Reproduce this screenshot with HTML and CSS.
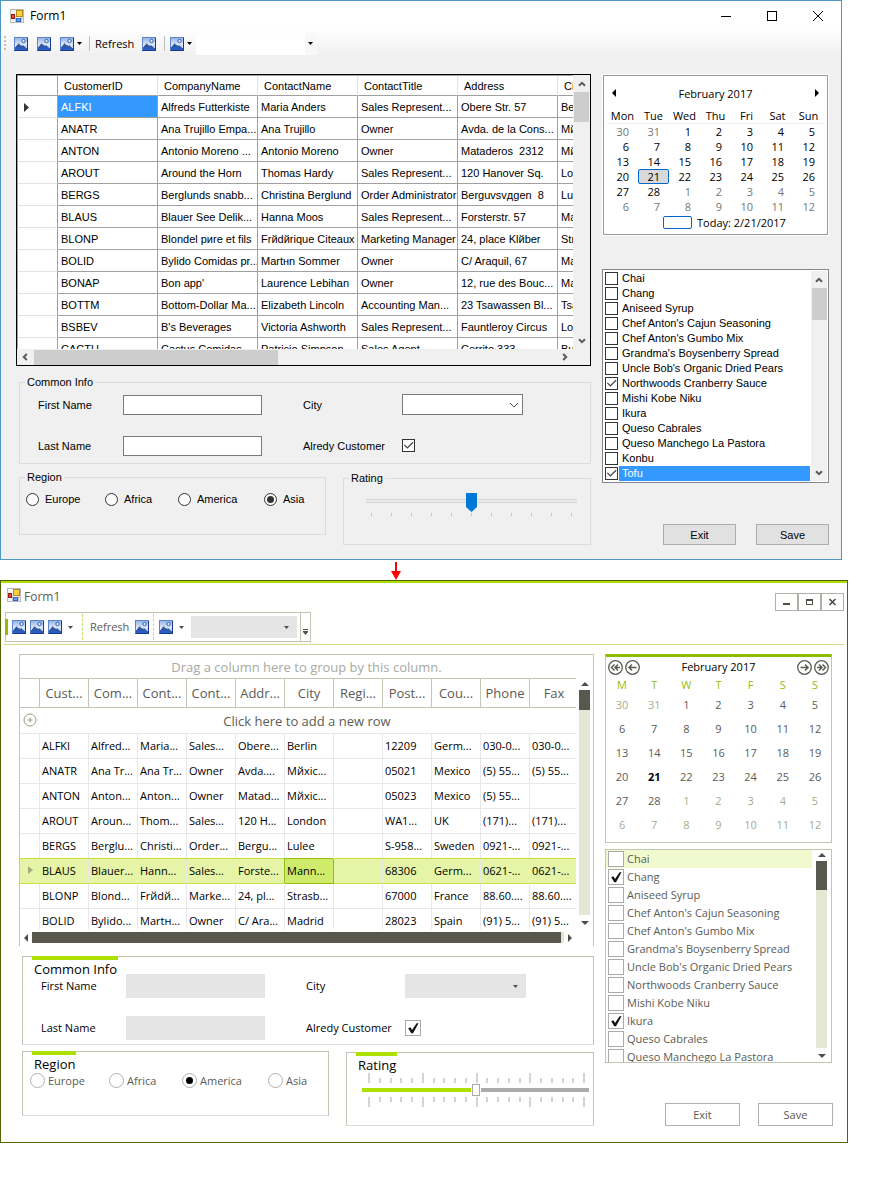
FILE: index.html
```html
<!DOCTYPE html>
<html lang="en">
<head>
<meta charset="utf-8">
<title>Form1</title>
<link rel="stylesheet" href="styles.css">
</head>
<body>
<svg class="defs" width="0" height="0" aria-hidden="true">
  <defs>
    <linearGradient id="sky" x1="0" y1="0" x2="0" y2="1"><stop offset="0" stop-color="#8fb0e4"/><stop offset="0.55" stop-color="#dfeafb"/><stop offset="1" stop-color="#6f97dc"/></linearGradient>
    <linearGradient id="hill" x1="0" y1="0" x2="0" y2="1"><stop offset="0" stop-color="#2f4f86"/><stop offset="1" stop-color="#2a5fc8"/></linearGradient>
    <symbol id="picture" viewBox="0 0 14 14">
      <rect x="0.5" y="0.5" width="13" height="13" fill="url(#sky)" stroke="#5b82c8"/>
      <path d="M1 10 L4.5 5.5 L7.5 8.5 L9 7.5 L13 11 V13 H1Z" fill="url(#hill)"/>
      <path d="M1 10 L4.5 5.8 L7 8.4 M8 8.6 L9.2 7.8 L13 11" fill="none" stroke="#fff" stroke-width="0.8"/>
      <circle cx="9.5" cy="4" r="1.7" fill="#e8f0fd" stroke="#2f5cae"/>
      <path d="M0.5 13.5H13.5V1" fill="none" stroke="#16398c"/>
    </symbol>
    <symbol id="app" viewBox="0 0 14 14">
      <rect x="0.5" y="0.5" width="13" height="13" fill="#f4f4f4" stroke="#b9b9b9"/>
      <path d="M0 9.5H14M5.5 8V14M11.5 8V14" stroke="#c4c4c4"/>
      <rect x="6.5" y="1.5" width="6" height="6" fill="#fccf3f" stroke="#b98a16"/>
      <rect x="1.5" y="5.5" width="3" height="4" fill="#e0473a" stroke="#971b12"/>
      <rect x="6.5" y="9.5" width="4" height="3" fill="#69a5f2" stroke="#2f69c6"/>
    </symbol>
    <symbol id="down" viewBox="0 0 5 3"><path d="M0 0H5L2.5 3Z" fill="currentColor"/></symbol>
    <symbol id="chev" viewBox="0 0 8 6"><path d="M1 4.8L4 1.8L7 4.8" fill="none" stroke="currentColor" stroke-width="2"/></symbol>
    <symbol id="tri" viewBox="0 0 8 4"><path d="M0 4L4 0L8 4Z" fill="currentColor"/></symbol>
  </defs>
</svg>

<main>
<section class="win classic" aria-label="Form1 classic">
  <header class="titlebar">
    <svg class="ico"><use href="#app"/></svg>
    <h1>Form1</h1>
    <div class="sysbuttons">
      <button aria-label="Minimize"><svg width="10" height="10"><path d="M0 5.5H10" stroke="#000"/></svg></button>
      <button aria-label="Maximize"><svg width="10" height="10"><rect x="0.5" y="0.5" width="9" height="9" fill="none" stroke="#000"/></svg></button>
      <button aria-label="Close"><svg width="10" height="10"><path d="M0 0L10 10M10 0L0 10" stroke="#000"/></svg></button>
    </div>
  </header>
  <div class="toolbar">
    <span class="grip"></span>
    <button aria-label="Picture one"><svg class="ico"><use href="#picture"/></svg></button>
    <button aria-label="Picture two"><svg class="ico"><use href="#picture"/></svg></button>
    <button class="drop" aria-label="Picture menu"><svg class="ico"><use href="#picture"/></svg><svg class="arr"><use href="#down"/></svg></button>
    <span class="sep"></span>
    <button class="txt">Refresh</button>
    <button aria-label="Picture three"><svg class="ico"><use href="#picture"/></svg></button>
    <span class="sep sep2"></span>
    <button class="drop" aria-label="Picture menu two"><svg class="ico"><use href="#picture"/></svg><svg class="arr"><use href="#down"/></svg></button>
    <span class="combo"><select aria-label="Tool choice"><option></option></select><svg class="arr"><use href="#down"/></svg></span>
  </div>

  <div class="content">
    <div class="left">
      <div class="datagrid">
        <div class="view">
          <table>
            <colgroup><col class="rh"><col><col><col><col><col><col></colgroup>
            <thead><tr><th></th><th>CustomerID</th><th>CompanyName</th><th>ContactName</th><th>ContactTitle</th><th>Address</th><th>City</th></tr></thead>
            <tbody>
              <tr><th><svg width="5" height="9"><path d="M0 0L5 4.5L0 9Z" fill="#333"/></svg></th><td class="sel">ALFKI</td><td>Alfreds Futterkiste</td><td>Maria Anders</td><td>Sales Represent...</td><td>Obere Str. 57</td><td>Berlin</td></tr>
              <tr><th></th><td>ANATR</td><td>Ana Trujillo Empa...</td><td>Ana Trujillo</td><td>Owner</td><td>Avda. de la Cons...</td><td>Mйxico D.F.</td></tr>
              <tr><th></th><td>ANTON</td><td>Antonio Moreno ...</td><td>Antonio Moreno</td><td>Owner</td><td>Mataderos  2312</td><td>Mйxico D.F.</td></tr>
              <tr><th></th><td>AROUT</td><td>Around the Horn</td><td>Thomas Hardy</td><td>Sales Represent...</td><td>120 Hanover Sq.</td><td>London</td></tr>
              <tr><th></th><td>BERGS</td><td>Berglunds snabb...</td><td>Christina Berglund</td><td>Order Administrator</td><td>Berguvsvдgen  8</td><td>Lulee</td></tr>
              <tr><th></th><td>BLAUS</td><td>Blauer See Delik...</td><td>Hanna Moos</td><td>Sales Represent...</td><td>Forsterstr. 57</td><td>Mannheim</td></tr>
              <tr><th></th><td>BLONP</td><td>Blondel pиre et fils</td><td>Frйdйrique Citeaux</td><td>Marketing Manager</td><td>24, place Klйber</td><td>Strasbourg</td></tr>
              <tr><th></th><td>BOLID</td><td>Bуlido Comidas pr...</td><td>Martнn Sommer</td><td>Owner</td><td>C/ Araquil, 67</td><td>Madrid</td></tr>
              <tr><th></th><td>BONAP</td><td>Bon app'</td><td>Laurence Lebihan</td><td>Owner</td><td>12, rue des Bouc...</td><td>Marseille</td></tr>
              <tr><th></th><td>BOTTM</td><td>Bottom-Dollar Ma...</td><td>Elizabeth Lincoln</td><td>Accounting Man...</td><td>23 Tsawassen Bl...</td><td>Tsawassen</td></tr>
              <tr><th></th><td>BSBEV</td><td>B's Beverages</td><td>Victoria Ashworth</td><td>Sales Represent...</td><td>Fauntleroy Circus</td><td>London</td></tr>
              <tr><th></th><td>CACTU</td><td>Cactus Comidas ...</td><td>Patricio Simpson</td><td>Sales Agent</td><td>Cerrito 333</td><td>Buenos Aires</td></tr>
            </tbody>
          </table>
        </div>
        <div class="vbar"><svg class="chev"><use href="#chev"/></svg><span class="thumb"></span><svg class="chev flip"><use href="#chev"/></svg></div>
        <div class="hbar"><svg class="chev west"><use href="#chev"/></svg><span class="thumb"></span><svg class="chev east"><use href="#chev"/></svg></div>
      </div>

      <fieldset class="common">
        <legend>Common Info</legend>
        <div class="fields">
          <label for="a-first">First Name</label><input id="a-first" type="text">
          <label class="second" for="a-city">City</label><span class="combo"><select id="a-city"><option></option></select><svg width="10" height="6"><path d="M1 1L5 5L9 1" fill="none" stroke="#555"/></svg></span>
          <label for="a-last">Last Name</label><input id="a-last" type="text">
          <label class="second" for="a-cust">Alredy Customer</label><input id="a-cust" type="checkbox" checked>
        </div>
      </fieldset>

      <div class="pair">
        <fieldset class="region">
          <legend>Region</legend>
          <div class="radios">
            <label><input type="radio" name="ra">Europe</label>
            <label><input type="radio" name="ra">Africa</label>
            <label><input type="radio" name="ra">America</label>
            <label><input type="radio" name="ra" checked>Asia</label>
          </div>
        </fieldset>
        <fieldset class="rating">
          <legend>Rating</legend>
          <input type="range" aria-label="Rating" min="0" max="10" value="5">
          <div class="ticks"><i></i><i></i><i></i><i></i><i></i><i></i><i></i><i></i><i></i><i></i><i></i></div>
        </fieldset>
      </div>
    </div>

    <div class="right">
      <div class="calendar">
        <div class="cal-head">
          <button aria-label="Previous month"><svg width="4" height="8"><path d="M4 0V8L0 4Z" fill="#000"/></svg></button>
          <span>February 2017</span>
          <button aria-label="Next month"><svg width="4" height="8"><path d="M0 0V8L4 4Z" fill="#000"/></svg></button>
        </div>
        <table>
          <thead><tr><th>Mon</th><th>Tue</th><th>Wed</th><th>Thu</th><th>Fri</th><th>Sat</th><th>Sun</th></tr></thead>
          <tbody>
            <tr><td class="out">30</td><td class="out">31</td><td>1</td><td>2</td><td>3</td><td>4</td><td>5</td></tr>
            <tr><td>6</td><td>7</td><td>8</td><td>9</td><td>10</td><td>11</td><td>12</td></tr>
            <tr><td>13</td><td>14</td><td>15</td><td>16</td><td>17</td><td>18</td><td>19</td></tr>
            <tr><td>20</td><td class="day">21</td><td>22</td><td>23</td><td>24</td><td>25</td><td>26</td></tr>
            <tr><td>27</td><td>28</td><td class="out">1</td><td class="out">2</td><td class="out">3</td><td class="out">4</td><td class="out">5</td></tr>
            <tr><td class="out">6</td><td class="out">7</td><td class="out">8</td><td class="out">9</td><td class="out">10</td><td class="out">11</td><td class="out">12</td></tr>
          </tbody>
        </table>
        <div class="today"><span class="box"></span>Today: 2/21/2017</div>
      </div>

      <div class="list">
        <ul>
          <li><label><input type="checkbox"><span>Chai</span></label></li>
          <li><label><input type="checkbox"><span>Chang</span></label></li>
          <li><label><input type="checkbox"><span>Aniseed Syrup</span></label></li>
          <li><label><input type="checkbox"><span>Chef Anton's Cajun Seasoning</span></label></li>
          <li><label><input type="checkbox"><span>Chef Anton's Gumbo Mix</span></label></li>
          <li><label><input type="checkbox"><span>Grandma's Boysenberry Spread</span></label></li>
          <li><label><input type="checkbox"><span>Uncle Bob's Organic Dried Pears</span></label></li>
          <li><label><input type="checkbox" checked><span>Northwoods Cranberry Sauce</span></label></li>
          <li><label><input type="checkbox"><span>Mishi Kobe Niku</span></label></li>
          <li><label><input type="checkbox"><span>Ikura</span></label></li>
          <li><label><input type="checkbox"><span>Queso Cabrales</span></label></li>
          <li><label><input type="checkbox"><span>Queso Manchego La Pastora</span></label></li>
          <li><label><input type="checkbox"><span>Konbu</span></label></li>
          <li class="sel"><label><input type="checkbox" checked><span>Tofu</span></label></li>
        </ul>
        <div class="vbar"><svg class="chev"><use href="#chev"/></svg><span class="thumb"></span><svg class="chev flip"><use href="#chev"/></svg></div>
      </div>

      <div class="actions"><button>Exit</button><button>Save</button></div>
    </div>
  </div>
</section>

<div class="becomes"><svg width="10" height="18" aria-hidden="true"><path d="M5 0V10" stroke="#f00" stroke-width="2"/><path d="M0 9H10L5 18Z" fill="#f00"/></svg></div>

<section class="win themed" aria-label="Form1 themed">
  <header class="titlebar">
    <svg class="ico"><use href="#app"/></svg>
    <h1>Form1</h1>
    <div class="sysbuttons">
      <button aria-label="Minimize"><svg width="8" height="8"><path d="M0 6H7" stroke="#4f4f48" stroke-width="2"/></svg></button>
      <button aria-label="Maximize"><svg width="8" height="8"><path d="M0.5 1V7M6.5 1V7M0 6.5H7" stroke="#4f4f48"/><path d="M0 2H7" stroke="#4f4f48" stroke-width="2"/></svg></button>
      <button aria-label="Close"><svg width="8" height="8"><path d="M0.5 1L6.5 7M6.5 1L0.5 7" stroke="#4f4f48" stroke-width="1.6"/></svg></button>
    </div>
  </header>
  <div class="toolrow">
    <div class="toolbar">
      <span class="grip"></span>
      <button aria-label="Picture one"><svg class="ico"><use href="#picture"/></svg></button>
      <button aria-label="Picture two"><svg class="ico"><use href="#picture"/></svg></button>
      <button class="drop" aria-label="Picture menu"><svg class="ico"><use href="#picture"/></svg><svg class="arr"><use href="#down"/></svg></button>
      <span class="sep"></span>
      <button class="txt">Refresh</button>
      <button aria-label="Picture three"><svg class="ico"><use href="#picture"/></svg></button>
      <span class="sep sep2"></span>
      <button class="drop" aria-label="Picture menu two"><svg class="ico"><use href="#picture"/></svg><svg class="arr"><use href="#down"/></svg></button>
      <span class="combo"><select aria-label="Tool choice"><option></option></select><svg class="arr"><use href="#down"/></svg></span>
      <button class="more" aria-label="More tools"><svg width="5" height="6"><path d="M0 0.5H5" stroke="#4f4f48"/><path d="M0 2H5V3L2.5 6L0 3Z" fill="#4f4f48"/></svg></button>
    </div>
  </div>

  <div class="content">
    <div class="left">
      <div class="datagrid">
        <div class="group-panel">Drag a column here to group by this column.</div>
        <div class="view">
          <table>
            <colgroup><col class="rh"><col><col><col><col><col><col><col><col><col><col><col></colgroup>
            <thead><tr><th></th><th>Cust...</th><th>Com...</th><th>Cont...</th><th>Cont...</th><th>Addr...</th><th>City</th><th>Regi...</th><th>Post...</th><th>Cou...</th><th>Phone</th><th>Fax</th></tr></thead>
            <tbody>
              <tr class="newrow"><th><svg width="14" height="14"><circle cx="7" cy="7" r="6" fill="none" stroke="#9aa27a"/><path d="M4.5 7H9.5M7 4.5V9.5" stroke="#9aa27a"/></svg></th><td colspan="11">Click here to add a new row</td></tr>
              <tr><th></th><td>ALFKI</td><td>Alfred...</td><td>Maria...</td><td>Sales...</td><td>Obere...</td><td>Berlin</td><td></td><td>12209</td><td>Germ...</td><td>030-0...</td><td>030-0...</td></tr>
              <tr><th></th><td>ANATR</td><td>Ana Tr...</td><td>Ana Tr...</td><td>Owner</td><td>Avda....</td><td>Mйxic...</td><td></td><td>05021</td><td>Mexico</td><td>(5) 55...</td><td>(5) 55...</td></tr>
              <tr><th></th><td>ANTON</td><td>Anton...</td><td>Anton...</td><td>Owner</td><td>Matad...</td><td>Mйxic...</td><td></td><td>05023</td><td>Mexico</td><td>(5) 55...</td><td></td></tr>
              <tr><th></th><td>AROUT</td><td>Aroun...</td><td>Thom...</td><td>Sales...</td><td>120 H...</td><td>London</td><td></td><td>WA1...</td><td>UK</td><td>(171)...</td><td>(171)...</td></tr>
              <tr><th></th><td>BERGS</td><td>Berglu...</td><td>Christi...</td><td>Order...</td><td>Bergu...</td><td>Lulee</td><td></td><td>S-958...</td><td>Sweden</td><td>0921-...</td><td>0921-...</td></tr>
              <tr class="current"><th><svg width="5" height="8"><path d="M0 0L5 4L0 8Z" fill="#a3ad7c"/></svg></th><td>BLAUS</td><td>Blauer...</td><td>Hann...</td><td>Sales...</td><td>Forste...</td><td class="cell">Mann...</td><td></td><td>68306</td><td>Germ...</td><td>0621-...</td><td>0621-...</td></tr>
              <tr><th></th><td>BLONP</td><td>Blond...</td><td>Frйdй...</td><td>Marke...</td><td>24, pl...</td><td>Strasb...</td><td></td><td>67000</td><td>France</td><td>88.60....</td><td>88.60....</td></tr>
              <tr><th></th><td>BOLID</td><td>Bуlido...</td><td>Martн...</td><td>Owner</td><td>C/ Ara...</td><td>Madrid</td><td></td><td>28023</td><td>Spain</td><td>(91) 5...</td><td>(91) 5...</td></tr>
            </tbody>
          </table>
        </div>
        <div class="vbar"><svg class="tri"><use href="#tri"/></svg><span class="track"><span class="thumb"></span></span><svg class="tri flip"><use href="#tri"/></svg></div>
        <div class="hbar"><svg width="4" height="8"><path d="M4 0V8L0 4Z" fill="#4f4f48"/></svg><span class="track"><span class="thumb"></span></span><svg width="4" height="8"><path d="M0 0V8L4 4Z" fill="#4f4f48"/></svg></div>
      </div>

      <div class="group" role="group" aria-labelledby="g-common">
        <h2 id="g-common">Common Info</h2>
        <div class="fields">
          <label for="b-first">First Name</label><input id="b-first" type="text">
          <label class="second" for="b-city">City</label><span class="combo"><select id="b-city"><option></option></select><svg class="arr"><use href="#down"/></svg></span>
          <label for="b-last">Last Name</label><input id="b-last" type="text">
          <label class="second" for="b-cust">Alredy Customer</label><input id="b-cust" type="checkbox" checked>
        </div>
      </div>

      <div class="pair">
        <div class="group region" role="group" aria-labelledby="g-region">
          <h2 id="g-region">Region</h2>
          <div class="radios">
            <label><input type="radio" name="rb">Europe</label>
            <label><input type="radio" name="rb">Africa</label>
            <label><input type="radio" name="rb" checked>America</label>
            <label><input type="radio" name="rb">Asia</label>
          </div>
        </div>
        <div class="group rating" role="group" aria-labelledby="g-rating">
          <h2 id="g-rating">Rating</h2>
          <div class="slider">
            <div class="ticks up"><i></i><i></i><i></i><i></i><i></i><i></i><i></i><i></i><i></i><i></i><i></i><i></i><i></i><i></i><i></i><i></i><i></i><i></i><i></i><i></i><i></i></div>
            <input type="range" aria-labelledby="g-rating" min="0" max="20" value="10">
            <div class="ticks"><i></i><i></i><i></i><i></i><i></i><i></i><i></i><i></i><i></i><i></i><i></i><i></i><i></i><i></i><i></i><i></i><i></i><i></i><i></i><i></i><i></i></div>
          </div>
        </div>
      </div>
    </div>

    <div class="right">
      <div class="calendar">
        <div class="cal-head">
          <button aria-label="Previous year"><svg width="15" height="15"><circle cx="7.5" cy="7.5" r="6.8" fill="none" stroke="#5b5b54" stroke-width="1.3"/><path d="M6.5 4.5L3.5 7.5L6.5 10.5M10 4.5L7 7.5L10 10.5M7 7.5H12" fill="none" stroke="#5b5b54" stroke-width="1.5"/></svg></button>
          <button aria-label="Previous month"><svg width="15" height="15"><circle cx="7.5" cy="7.5" r="6.8" fill="none" stroke="#5b5b54" stroke-width="1.3"/><path d="M7 4.5L4 7.5L7 10.5M4 7.5H11.5" fill="none" stroke="#5b5b54" stroke-width="1.5"/></svg></button>
          <span>February 2017</span>
          <button aria-label="Next month"><svg width="15" height="15"><circle cx="7.5" cy="7.5" r="6.8" fill="none" stroke="#5b5b54" stroke-width="1.3"/><path d="M8 4.5L11 7.5L8 10.5M11 7.5H3.5" fill="none" stroke="#5b5b54" stroke-width="1.5"/></svg></button>
          <button aria-label="Next year"><svg width="15" height="15"><circle cx="7.5" cy="7.5" r="6.8" fill="none" stroke="#5b5b54" stroke-width="1.3"/><path d="M8.5 4.5L11.5 7.5L8.5 10.5M5 4.5L8 7.5L5 10.5M8 7.5H3" fill="none" stroke="#5b5b54" stroke-width="1.5"/></svg></button>
        </div>
        <table>
          <thead><tr><th>M</th><th>T</th><th>W</th><th>T</th><th>F</th><th>S</th><th>S</th></tr></thead>
          <tbody>
            <tr><td class="out">30</td><td class="out">31</td><td>1</td><td>2</td><td>3</td><td>4</td><td>5</td></tr>
            <tr><td>6</td><td>7</td><td>8</td><td>9</td><td>10</td><td>11</td><td>12</td></tr>
            <tr><td>13</td><td>14</td><td>15</td><td>16</td><td>17</td><td>18</td><td>19</td></tr>
            <tr><td>20</td><td class="day">21</td><td>22</td><td>23</td><td>24</td><td>25</td><td>26</td></tr>
            <tr><td>27</td><td>28</td><td class="out">1</td><td class="out">2</td><td class="out">3</td><td class="out">4</td><td class="out">5</td></tr>
            <tr><td class="out">6</td><td class="out">7</td><td class="out">8</td><td class="out">9</td><td class="out">10</td><td class="out">11</td><td class="out">12</td></tr>
          </tbody>
        </table>
      </div>

      <div class="list">
        <ul>
          <li class="sel"><label><input type="checkbox"><span>Chai</span></label></li>
          <li><label><input type="checkbox" checked><span>Chang</span></label></li>
          <li><label><input type="checkbox"><span>Aniseed Syrup</span></label></li>
          <li><label><input type="checkbox"><span>Chef Anton's Cajun Seasoning</span></label></li>
          <li><label><input type="checkbox"><span>Chef Anton's Gumbo Mix</span></label></li>
          <li><label><input type="checkbox"><span>Grandma's Boysenberry Spread</span></label></li>
          <li><label><input type="checkbox"><span>Uncle Bob's Organic Dried Pears</span></label></li>
          <li><label><input type="checkbox"><span>Northwoods Cranberry Sauce</span></label></li>
          <li><label><input type="checkbox"><span>Mishi Kobe Niku</span></label></li>
          <li><label><input type="checkbox" checked><span>Ikura</span></label></li>
          <li><label><input type="checkbox"><span>Queso Cabrales</span></label></li>
          <li><label><input type="checkbox"><span>Queso Manchego La Pastora</span></label></li>
        </ul>
        <div class="vbar"><svg class="tri"><use href="#tri"/></svg><span class="track"><span class="thumb"></span></span><svg class="tri flip"><use href="#tri"/></svg></div>
      </div>

      <div class="actions"><button>Exit</button><button>Save</button></div>
    </div>
  </div>
</section>
</main>
</body>
</html>
```

FILE: styles.css
```css
*, *::before, *::after { box-sizing: border-box; }
body { margin: 0; background: #fff; color: #000; }
h1, h2, ul, fieldset, legend { margin: 0; padding: 0; font-weight: normal; }
ul { list-style: none; }
svg { display: block; flex: none; }
.defs { position: absolute; }
button, input, select { margin: 0; padding: 0; font: inherit; color: inherit; }
button { border: 0; background: none; display: flex; align-items: center; justify-content: center; }
select, input { appearance: none; border: 0; border-radius: 0; }
table { border-spacing: 0; table-layout: fixed; }
th, td { padding: 0; font-weight: normal; white-space: pre; overflow: hidden; }
.ico { width: 14px; height: 14px; }
.arr { width: 5px; height: 3px; }
.chev { width: 8px; height: 6px; color: #5a5a5a; }
.tri { width: 8px; height: 4px; color: #4f4f48; }
.flip { transform: rotate(180deg); }
.west { transform: rotate(-90deg); }
.east { transform: rotate(90deg); }
.combo { display: grid; align-items: center; }
.combo > * { grid-area: 1 / 1; }
.combo select { width: 100%; height: 100%; }
.combo svg { justify-self: end; pointer-events: none; }
.titlebar { display: flex; }
.sysbuttons { display: flex; margin-left: auto; }
.toolbar { display: flex; align-items: center; }
.content { display: grid; grid-template-columns: minmax(0, 1fr) 227px; column-gap: 11px; }
.pair { display: flex; gap: 17px; align-items: flex-start; margin-left: 3px; }
.region { flex: none; width: 307px; }
.rating { flex: 1; min-width: 0; }
.fields { display: grid; grid-template-columns: 85px 139px 140px 121px; align-items: center; }
.second { padding-left: 41px; }
.radios { display: grid; grid-template-columns: 79px 73px 86px auto; }
.radios label { display: flex; align-items: center; }
.ticks { display: flex; justify-content: space-between; }
.list { display: flex; overflow: hidden; }
.list ul { flex: 1; min-width: 0; }
.list label { display: flex; align-items: center; }
.list li span { flex: 1; }
.vbar { display: flex; flex-direction: column; align-items: center; }
.hbar { display: flex; align-items: center; }
.cal-head { display: flex; align-items: center; }
.cal-head span { flex: 1; text-align: center; }
.calendar table { width: 100%; }
.actions { display: flex; justify-content: flex-end; }
input[type="checkbox"], input[type="radio"] { display: grid; place-items: center; flex: none; background: #fff; }
input[type="radio"] { border-radius: 50%; }
input[type="radio"]:checked::before { content: ""; border-radius: 50%; }

/* Classic window */
.classic { margin-right: 29px; border: 1px solid #4f97c6; background: #f0f0f0; font: 11px/13px "Liberation Sans", Arial, sans-serif; }
.classic .titlebar { height: 30px; align-items: center; padding-left: 9px; gap: 6px; background: #fff; }
.classic h1, .classic .txt, .classic .calendar { font: 12px/16px "Open Sans", "Noto Sans", sans-serif; }
.classic .sysbuttons button { width: 46px; height: 28px; }
.classic .toolbar { height: 25px; padding-left: 3px; background: linear-gradient(#fdfdfd, #f0f0f0); }
.classic .grip { width: 2px; height: 15px; margin-right: 8px; background: repeating-linear-gradient(#c0c0c0 0 2px, transparent 2px 4px); }
.classic .toolbar button { margin-right: 9px; }
.classic .toolbar .drop { gap: 3px; margin-right: 7px; }
.classic .toolbar .txt { margin-right: 8px; font-size: 11px; }
.classic .sep { width: 1px; height: 15px; margin-right: 5px; background: #bdbdbd; }
.classic .sep2 { margin-left: -1px; }
.classic .toolbar .sep2 + .drop { margin-right: 4px; }
.classic .toolbar .combo { width: 121px; height: 22px; }
.classic .toolbar .combo select { background: linear-gradient(90deg, #fff 109px, #f8f8f8 109px); }
.classic .toolbar .combo svg { margin-right: 4px; }
.classic .content { padding: 18px 12px 14px 15px; }
.classic .datagrid { display: grid; grid-template-columns: minmax(0, 1fr) 17px; grid-template-rows: 274px 16px; border: 1px solid #000; background: #f0f0f0; }
.classic .view { overflow: hidden; border-top: 1px solid #a0a0a0; border-left: 1px solid #a0a0a0; background: #fff; }
.classic .view table { width: 640px; }
.classic .rh { width: 40px; }
.classic .view th, .classic .view td { height: 22px; border-right: 1px solid #a0a0a0; border-bottom: 1px solid #a0a0a0; text-align: left; padding: 2px 0 0 3px; }
.classic .view thead th { height: 20px; padding-left: 6px; border-right-color: #e3e3e3; }
.classic .view thead th:first-child { border-right-color: #a0a0a0; }
.classic .view tbody th { border-bottom-color: #e3e3e3; padding-left: 6px; }
.classic td.sel { background: #3399ff; color: #fff; }
.classic .vbar { padding: 6px 0 5px; background: #f0f0f0; }
.classic .vbar .flip { margin-top: auto; }
.classic .vbar .thumb { width: 15px; height: 30px; margin-top: 5px; background: #cdcdcd; }
.classic .hbar { grid-column: 1; padding: 0 4px; }
.classic .hbar .thumb { width: 244px; height: 15px; margin-left: 5px; background: #cdcdcd; }
.classic .hbar .east { margin-left: auto; }
.classic fieldset { border: 1px solid #dcdcdc; }
.classic legend { margin-left: 5px; padding: 0 2px; line-height: 13px; }
.classic .common { margin: 10px 0 7px 3px; }
.classic .fields { padding: 5px 0 7px 18px; grid-auto-rows: 21px; row-gap: 20px; }
.classic .fields label { padding-top: 2px; }
.classic .fields input[type="text"] { height: 20px; border: 1px solid #7a7a7a; background: #fff; }
.classic .fields .combo { height: 21px; }
.classic .fields .combo select { border: 1px solid #7a7a7a; background: #fff; }
.classic .fields .combo svg { margin-right: 4px; }
.classic input[type="checkbox"], .classic input[type="radio"] { width: 13px; height: 13px; border: 1px solid #333; }
.classic input[type="checkbox"]:checked::before { content: ""; width: 11px; height: 11px; background: #444; clip-path: polygon(8% 48%, 16% 40%, 40% 64%, 88% 16%, 96% 24%, 40% 80%); }
.classic input[type="radio"]:checked::before { width: 7px; height: 7px; background: #333; }
.classic .radios { padding: 9px 0 28px 6px; }
.classic .radios label { gap: 6px; }
.classic .rating { margin-top: 1px; padding: 8px 13px 28px 22px; }
.classic .rating legend { margin-left: -17px; }
.classic input[type="range"] { display: block; width: 100%; height: 19px; background: linear-gradient(transparent 6px, #d6d6d6 6px 7px, #e7eaea 7px 9px, #d6d6d6 9px 10px, transparent 10px); }
.classic input[type="range"]::-webkit-slider-thumb { appearance: none; width: 11px; height: 19px; background: #0078d7; clip-path: polygon(0 0, 100% 0, 100% 74%, 50% 100%, 0 74%); }
.classic .ticks { padding: 1px 5px 0; }
.classic .ticks i { width: 1px; height: 3px; background: #c4c4c4; }
.classic .calendar { margin: 1px; border: 1px solid #999; box-shadow: 0 0 0 1px #fff; background: #fff; font-size: 11px; line-height: 15px; }
.classic .cal-head { height: 33px; padding: 1px 8px 0; }
.classic .calendar table { padding: 0 3px; }
.classic .calendar th { height: 15px; line-height: 14px; border-bottom: 1px solid #f0f0f0; }
.classic .calendar td { height: 15px; line-height: 15px; padding-right: 9px; text-align: right; }
.classic .calendar .out { color: #777; }
.classic .calendar .day { padding-right: 8px; border: 1px solid #0066cc; border-radius: 2px; background: #d9d9d9; line-height: 13px; }
.classic .today { display: flex; align-items: center; gap: 5px; height: 20px; padding-left: 59px; padding-bottom: 4px; }
.classic .today .box { width: 29px; height: 13px; border: 1px solid #0066cc; border-radius: 2px; }
.classic .list { margin-top: 34px; padding: 1px; border: 1px solid #828790; background: #fff; }
.classic .list li { height: 15px; padding-left: 1px; }
.classic .list label { height: 15px; gap: 1px; }
.classic .list li span { padding-left: 3px; line-height: 15px; }
.classic .list .sel span { background: #3399ff; color: #fff; }
.classic .list .vbar { width: 16px; margin-left: 1px; }
.classic .list .thumb { height: 32px; }
.classic .actions { gap: 20px; margin-top: 41px; }
.classic .actions button { width: 73px; height: 21px; padding-top: 2px; border: 1px solid #adadad; background: #e1e1e1; }

.becomes { display: flex; align-items: flex-end; height: 20px; padding-left: 391px; }

/* Themed window */
.themed { margin-right: 23px; border: 1px solid #4f6500; background: #fff; color: #5b5b54; font: 11px/15px "Open Sans", "Noto Sans", sans-serif; box-shadow: inset 0 2px #abe000; }
.themed .titlebar { height: 31px; align-items: flex-start; gap: 3px; padding: 7px 3px 0 6px; }
.themed h1 { font-size: 12px; line-height: 17px; }
.themed .sysbuttons { padding-top: 5px; }
.themed .sysbuttons button { width: 23px; height: 18px; border: 1px solid #b0b0a8; }
.themed .toolrow { margin: 0 3px; padding: 0 1px 2px; border-bottom: 1px solid #cfdf8f; }
.themed .toolbar { width: 306px; height: 30px; border: 1px solid #c3c5b4; }
.themed .grip { width: 3px; height: 16px; margin: 0 4px 0 -1px; background: #8fbc00; }
.themed .toolbar button { margin-right: 4px; }
.themed .toolbar .drop { gap: 6px; margin-right: 9px; color: #4f4f48; }
.themed .toolbar .txt { margin-right: 6px; padding-bottom: 2px; }
.themed .sep { height: 26px; margin-right: 7px; border-left: 1px dashed #c5dd6a; }
.themed .toolbar .sep2 { margin-right: 5px; }
.themed .toolbar .sep2 + .drop { margin-right: 7px; }
.themed .toolbar .combo { width: 106px; height: 22px; }
.themed .combo select { background: #e5e5e5; }
.themed .combo svg { margin-right: 8px; color: #4f4f48; }
.themed .toolbar .more { width: 10px; height: 28px; margin: 0 0 0 auto; padding-top: 10px; border-left: 1px solid #c3c5b4; }
.themed .content { padding: 9px 15px 16px 18px; }
.themed .datagrid { display: grid; grid-template-columns: minmax(0, 1fr) 17px; grid-template-rows: 23px 251px 17px; border: 1px solid #c3c5b4; border-bottom: 0; }
.themed .group-panel { grid-column: 1 / 3; color: #a9a9a1; font-size: 13px; line-height: 24px; text-align: center; }
.themed .view { overflow: hidden; color: #000; }
.themed .view table { width: 559px; }
.themed .rh { width: 20px; }
.themed .view th, .themed .view td { height: 25px; border-right: 1px solid #e8e8e8; border-bottom: 1px solid #e8e8e8; padding: 0 0 2px 2px; text-align: left; }
.themed .view thead th { height: 30px; padding: 0; border-color: #c3c5b4; border-top: 1px solid #c3c5b4; color: #5b5b54; font-size: 13px; text-align: center; }
.themed .view tbody th { padding-left: 8px; }
.themed .view .newrow th { height: 26px; padding-left: 3px; border-right: 0; }
.themed .view .newrow td { padding: 2px 4px 0 0; color: #5b5b54; font-size: 13px; text-align: center; }
.themed .view .current th, .themed .view .current td { border-bottom-color: #c3e03c; box-shadow: 0 -1px #c3e03c; background: #e5f4a6; }
.themed .view .current .cell { background: #cfeb6b; border-color: #95bc12; box-shadow: -1px -1px #95bc12; }
.themed .vbar { color: #4f4f48; }
.themed .track { flex: 1; display: flex; background: #e3e7d3; }
.themed .thumb { background: #58584f; }
.themed .vbar .track { width: 11px; }
.themed .vbar .thumb { width: 11px; height: 20px; }
.themed .datagrid .vbar { padding: 4px 0 4px; gap: 4px; }
.themed .datagrid .vbar .flip { margin-top: 2px; }
.themed .hbar { gap: 4px; padding: 0 4px; }
.themed .hbar .track { height: 11px; padding-right: 3px; }
.themed .hbar .thumb { width: 100%; }
.themed .group { border: 1px solid #c3c5b4; border-bottom-color: #deded8; }
.themed .left > .group { margin: 10px 0 6px 3px; }
.themed h2 { width: fit-content; height: 18px; margin: -1px 0 0 9px; padding: 0 1px 0 2px; border-top: 4px solid #abe000; color: #000; font-size: 13px; line-height: 18px; }
.themed .fields { padding: 0 0 4px 18px; grid-auto-rows: 24px; row-gap: 18px; color: #000; }
.themed .fields label { padding-bottom: 2px; }
.themed .fields input[type="text"], .themed .fields .combo { height: 24px; background: #e5e5e5; }
.themed input[type="checkbox"] { width: 16px; height: 16px; border: 1px solid #aaa; }
.themed input[type="checkbox"]:checked::before { content: ""; width: 12px; height: 12px; background: #111; clip-path: polygon(10% 52%, 28% 44%, 42% 66%, 80% 10%, 96% 10%, 50% 94%, 36% 94%); }
.themed input[type="radio"] { width: 15px; height: 15px; border: 1px solid #b0b0b0; }
.themed input[type="radio"]:checked::before { width: 7px; height: 7px; background: #000; }
.themed .radios { padding: 4px 0 27px 7px; }
.themed .radios label { gap: 3px; }
.themed .rating { margin-top: 1px; }
.themed .slider { padding: 3px 4px 18px 15px; }
.themed .ticks { margin: 0 4px 0 6px; height: 10px; }
.themed .ticks.up { align-items: flex-end; }
.themed .ticks i { width: 2px; height: 5px; background: #cfd4d4; }
.themed .ticks i:nth-child(5n+1) { height: 10px; }
.themed input[type="range"] { display: block; width: 100%; height: 14px; background: linear-gradient(90deg, #abe000 50%, #ababab 50%) center / 100% 4px no-repeat; }
.themed input[type="range"]::-webkit-slider-thumb { appearance: none; width: 8px; height: 12px; border: 1px solid #aaa; background: #fff; box-shadow: 0 0 0 1px #fff; }
.themed .calendar { border: 1px solid #c3c5b4; border-top: 3px solid #8fbc00; padding-bottom: 5px; }
.themed .cal-head { height: 20px; gap: 2px; padding: 0 2px; color: #000; }
.themed .cal-head span { padding-bottom: 1px; }
.themed .calendar th { height: 16px; padding-bottom: 1px; line-height: 14px; color: #95bc12; }
.themed .calendar td { height: 24px; padding-bottom: 2px; text-align: center; }
.themed .calendar .out { color: #a3ad94; }
.themed .calendar .day { color: #000; font-weight: bold; }
.themed .list { height: 214px; margin-top: 6px; border: 1px solid #c3c5b4; }
.themed .list li { height: 18px; padding-left: 2px; }
.themed .list label { height: 18px; gap: 3px; }
.themed .list li span { padding-bottom: 2px; }
.themed .list .sel { background: #f1f9cf; }
.themed .list .vbar { width: 19px; padding: 3px 0 4px; gap: 4px; }
.themed .list .vbar .flip { margin-top: 2px; }
.themed .list .vbar .thumb { height: 29px; }
.themed .actions { gap: 18px; margin: 40px -1px 0 0; }
.themed .actions button { width: 75px; height: 23px; border: 1px solid #b0b0b0; }
```
